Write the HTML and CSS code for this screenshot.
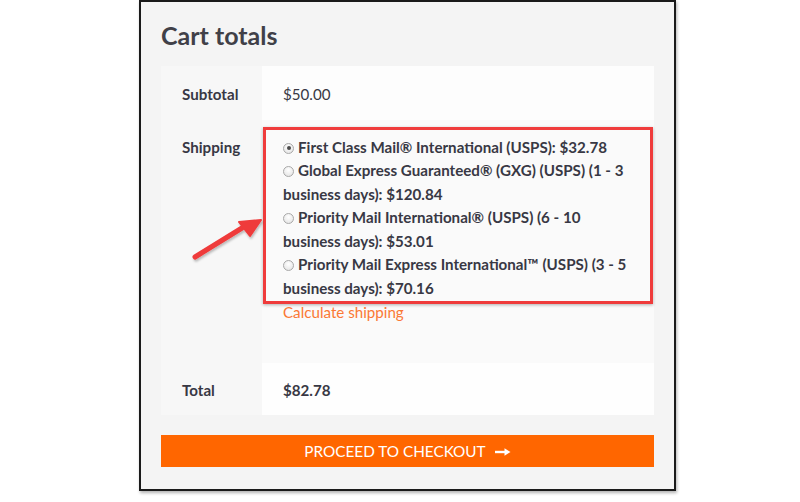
FILE: index.html
```html
<!DOCTYPE html>
<html>
<head>
<meta charset="utf-8">
<link rel="stylesheet" href="styles.css">
</head>
<body>
<div class="frame">
  <h2 class="title">Cart totals</h2>
  <div class="totals">
    <div class="label row-sub">Subtotal</div>
    <div class="value row-sub">$50.00</div>
    <div class="label row-ship">Shipping</div>
    <div class="value row-ship ship-val">
      <ul class="options">
        <li><span class="radio checked"></span>First Class Mail® International (USPS): $32.78</li>
        <li><span class="radio"></span>Global Express Guaranteed® (GXG) (USPS) (1 - 3 business days): $120.84</li>
        <li><span class="radio"></span>Priority Mail International® (USPS) (6 - 10 business days): $53.01</li>
        <li><span class="radio"></span>Priority Mail Express International™ (USPS) (3 - 5 business days): $70.16</li>
      </ul>
      <a class="calc">Calculate shipping</a>
    </div>
    <div class="label row-total">Total</div>
    <div class="value row-total total-val">$82.78</div>
  </div>
  <div class="checkout">PROCEED TO CHECKOUT<svg class="arr" width="16" height="10" viewBox="0 0 16 10"><path d="M0 5 H11" stroke="#fff" stroke-width="2.4"/><path d="M9.5 1.2 L15.5 5 L9.5 8.8 Z" fill="#fff"/></svg></div>
  <div class="highlight"></div>
  <svg class="pointer" width="80" height="50" viewBox="0 0 80 50">
    <defs>
      <filter id="sh" x="-20%" y="-20%" width="140%" height="160%">
        <feDropShadow dx="1" dy="2" stdDeviation="1.2" flood-color="#000" flood-opacity="0.25"/>
      </filter>
    </defs>
    <g filter="url(#sh)">
      <line x1="11" y1="43" x2="58" y2="14" stroke="#ef3b3b" stroke-width="5" stroke-linecap="round"/>
      <polygon points="77,6 55,8 66,22" fill="#ef3b3b" stroke="#ef3b3b" stroke-width="2" stroke-linejoin="round"/>
    </g>
  </svg>
</div>
</body>
</html>
```

FILE: styles.css
```css
html, body {
  margin: 0;
  padding: 0;
  background: #ffffff;
}
body {
  font-family: Lato, "Open Sans", "Liberation Sans", sans-serif;
  color: #383844;
  width: 800px;
  height: 502px;
  overflow: hidden;
}
.frame {
  position: relative;
  margin-left: 139px;
  width: 493px;
  height: 469px;
  padding: 18px 20px 0 20px;
  background: #f4f4f4;
  border: 2px solid #1a1a1a;
  box-shadow: 1px 2px 3px rgba(0,0,0,0.3);
}
.title {
  margin: 0 0 16px 0;
  font-size: 25px;
  line-height: 30px;
  font-weight: 700;
  color: #404048;
}
.totals {
  display: grid;
  grid-template-columns: 101px 392px;
  font-size: 15.15px;
  line-height: 23.5px;
}
.label {
  background: #f7f7f7;
  font-weight: 700;
  padding-left: 21px;
}
.value {
  background: #fdfdfd;
  padding-left: 21px;
  padding-right: 21px;
}
.row-sub {
  padding-top: 16.5px;
  padding-bottom: 13.5px;
}
.row-ship {
  padding-top: 16px;
  padding-bottom: 38px;
}
.ship-val {
  background: #fafafa;
  font-weight: 700;
}
.row-total {
  padding-top: 16px;
  padding-bottom: 13px;
}
.total-val {
  background: #fefefe;
  font-weight: 700;
}
.options {
  list-style: none;
  margin: 0;
  padding: 0;
}
.options li {
  margin: 0;
}
.radio {
  display: inline-block;
  box-sizing: border-box;
  width: 11px;
  height: 11px;
  border-radius: 50%;
  border: 1px solid #a8a8a8;
  background: radial-gradient(circle at 50% 35%, #ffffff 0%, #e6e6e6 80%);
  margin-right: 4px;
  vertical-align: -1px;
  position: relative;
}
.radio.checked::after {
  content: "";
  position: absolute;
  left: 2.5px;
  top: 2.5px;
  width: 4px;
  height: 4px;
  border-radius: 50%;
  background: #4a4a4a;
}
.calc {
  display: block;
  margin-top: 1px;
  color: #fb7835;
  font-weight: 400;
}
.checkout {
  margin-top: 20px;
  height: 32px;
  line-height: 32px;
  background: #ff6600;
  color: #ffffff;
  text-align: center;
  font-size: 15.3px;
}
.arr {
  display: inline-block;
  margin-left: 9px;
  vertical-align: 0px;
}
.highlight {
  position: absolute;
  left: 122px;
  top: 125px;
  width: 384px;
  height: 171px;
  border: 3px solid #ef3b3b;
  box-shadow: 0 1px 3px rgba(0,0,0,0.3);
}
.pointer {
  position: absolute;
  left: 43px;
  top: 212px;
}
```
